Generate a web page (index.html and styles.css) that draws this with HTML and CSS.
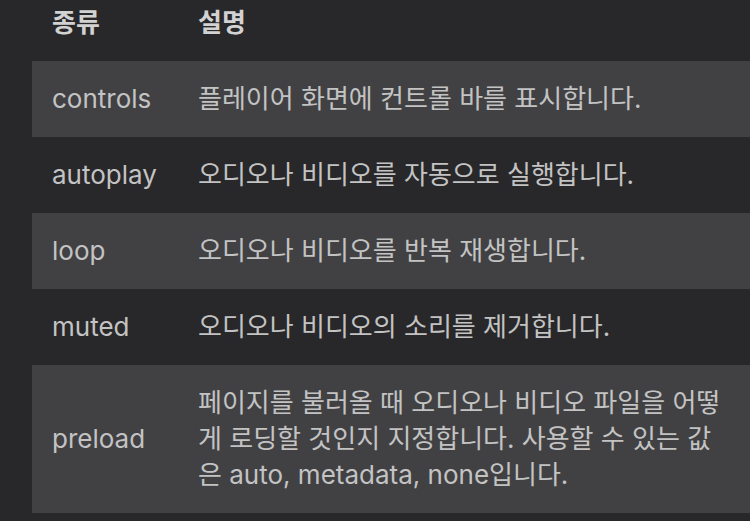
FILE: index.html
```html
<!DOCTYPE html>
<html lang="ko">
<head>
<meta charset="utf-8">
<link rel="stylesheet" href="styles.css">
</head>
<body>
<table class="attrs">
  <thead>
    <tr><th class="c1">종류</th><th>설명</th></tr>
  </thead>
  <tbody>
    <tr class="odd"><td class="c1">controls</td><td>플레이어 화면에 컨트롤 바를 표시합니다.</td></tr>
    <tr><td class="c1">autoplay</td><td>오디오나 비디오를 자동으로 실행합니다.</td></tr>
    <tr class="odd"><td class="c1">loop</td><td>오디오나 비디오를 반복 재생합니다.</td></tr>
    <tr><td class="c1">muted</td><td>오디오나 비디오의 소리를 제거합니다.</td></tr>
    <tr class="odd"><td class="c1">preload</td><td>페이지를 불러올 때 오디오나 비디오 파일을 어떻게 로딩할 것인지 지정합니다. 사용할 수 있는 값은 auto, metadata, none입니다.</td></tr>
  </tbody>
</table>
</body>
</html>
```
FILE: styles.css
```css
html, body {
  margin: 0;
  padding: 0;
  background: #28282a;
  overflow: hidden;
}
body {
  padding-left: 32px;
  font-family: Inter, "Noto Sans CJK KR", sans-serif;
  font-size: 26px;
  color: #c3c3c3;
}
.attrs {
  border-collapse: collapse;
  width: 718px;
  margin-top: -15px;
}
.attrs th, .attrs td {
  padding: 20px 20px;
  text-align: left;
  vertical-align: middle;
  line-height: 36px;
}
.attrs th {
  font-weight: 700;
  color: #d2d2d2;
}
.attrs .c1 {
  width: 106px;
}
.attrs td:last-child, .attrs th:last-child {
  padding-right: 22px;
}
.attrs tr.odd {
  background: #414143;
}
```
